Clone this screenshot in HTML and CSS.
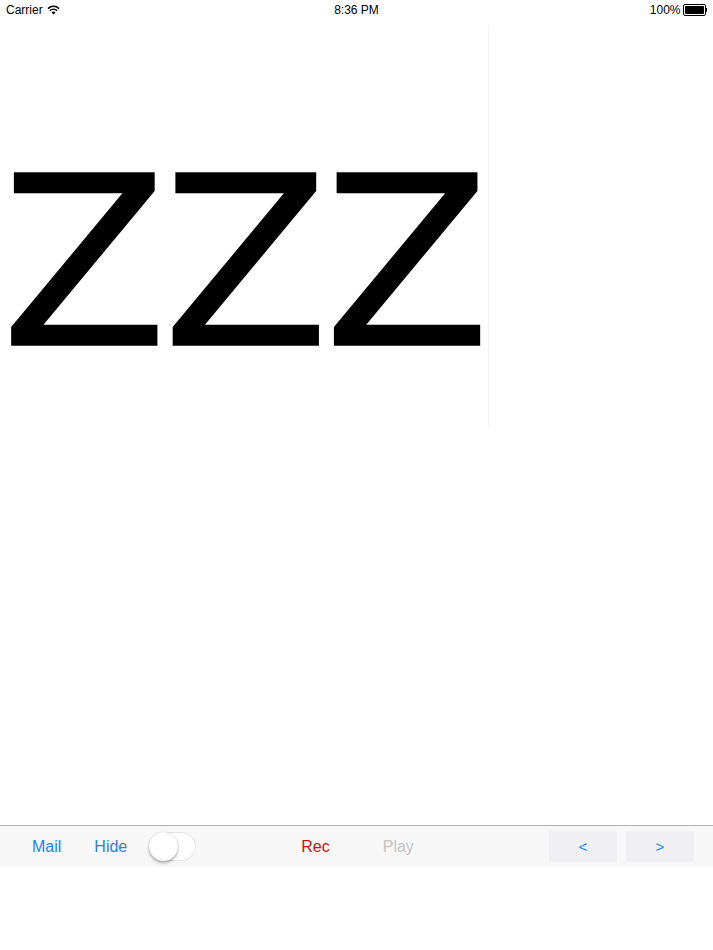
FILE: index.html
```html
<!DOCTYPE html>
<html>
<head>
<meta charset="utf-8">
<link rel="stylesheet" href="styles.css">
</head>
<body>
<div class="status">
  <div class="st-left">Carrier
    <svg class="wifi" width="13" height="10" viewBox="0 0 13 10"><path d="M6.5 9.5 L4.6 7.4 A2.8 2.8 0 0 1 8.4 7.4 Z" fill="#000"/><path d="M2.9 5.6 A5.2 5.2 0 0 1 10.1 5.6" fill="none" stroke="#000" stroke-width="1.5"/><path d="M1 3.6 A7.9 7.9 0 0 1 12 3.6" fill="none" stroke="#000" stroke-width="1.5"/></svg>
  </div>
  <div class="st-center">8:36 PM</div>
  <div class="st-right">100%
    <span class="battery"><span class="bat-fill"></span></span><span class="bat-tip"></span>
  </div>
</div>
<div class="main">
  <div class="pane">
    <div class="zzz">ZZZ</div>
  </div>
</div>
<div class="toolbar">
  <span class="tb-item blue mail">Mail</span>
  <span class="tb-item blue hide">Hide</span>
  <span class="switch"><span class="knob"></span></span>
  <span class="tb-item red rec">Rec</span>
  <span class="tb-item gray play">Play</span>
  <span class="spacer"></span>
  <span class="navbtn">&lt;</span>
  <span class="navbtn">&gt;</span>
</div>
</body>
</html>
```
FILE: styles.css
```css
html, body { margin: 0; padding: 0; background: #fff; }
body { width: 713px; height: 950px; font-family: "Liberation Sans", Arial, sans-serif; overflow: hidden; }

.status { height: 20px; display: flex; align-items: center; font-size: 12px; color: #000; position: relative; }
.st-left { padding-left: 6px; display: flex; align-items: center; gap: 4px; flex: 1; }
.st-center { position: absolute; left: 0; right: 0; text-align: center; }
.st-right { padding-right: 6px; display: flex; align-items: center; }
.wifi { display: block; }
.battery { display: inline-block; width: 19px; height: 8px; border: 1px solid #000; border-radius: 2px; margin-left: 2px; padding: 1px; box-sizing: content-box; }
.bat-fill { display: block; width: 100%; height: 100%; background: #000; border-radius: 1px; }
.bat-tip { display: inline-block; width: 1.5px; height: 4px; background: #000; }

.main { height: 805px; padding-top: 5px; box-sizing: border-box; }
.pane { width: 489px; height: 402px; border-right: 1px solid #f3f3f8; box-sizing: border-box; overflow: hidden; }
.zzz { font-family: "DejaVu Sans", sans-serif; font-size: 236px; line-height: 1; color: #000; padding-top: 121px; padding-left: 1px; letter-spacing: -5px; white-space: nowrap; -webkit-text-stroke: 1.5px #000; transform: scaleX(1.03); transform-origin: 0 0; }

.toolbar { height: 41px; border-top: 1px solid #b2b2b2; background: #f7f7f7; display: flex; align-items: center; font-size: 16px; }
.tb-item { display: inline-block; }
.blue { color: #1a82fb; }
.red { color: #d01010; }
.gray { color: #c4c4c4; }
.mail { margin-left: 32px; }
.hide { margin-left: 33px; }
.switch { margin-left: 22px; width: 45px; height: 27px; border: 1px solid #e3e3e3; border-radius: 15px; background: #fff; position: relative; box-sizing: content-box; }
.knob { position: absolute; left: -1px; top: -1px; width: 29px; height: 29px; border-radius: 50%; background: #fff; box-shadow: 0 2px 3px rgba(0,0,0,0.3), 0 0 1px rgba(0,0,0,0.25); }
.rec { margin-left: 105px; }
.play { margin-left: 53px; }
.spacer { flex: 1; }
.navbtn { width: 68px; height: 31px; background: #efeff4; color: #1a82fb; display: flex; align-items: center; justify-content: center; font-size: 15px; margin-right: 10px; }
.navbtn:last-child { margin-right: 19px; margin-left: -1px; }
```
